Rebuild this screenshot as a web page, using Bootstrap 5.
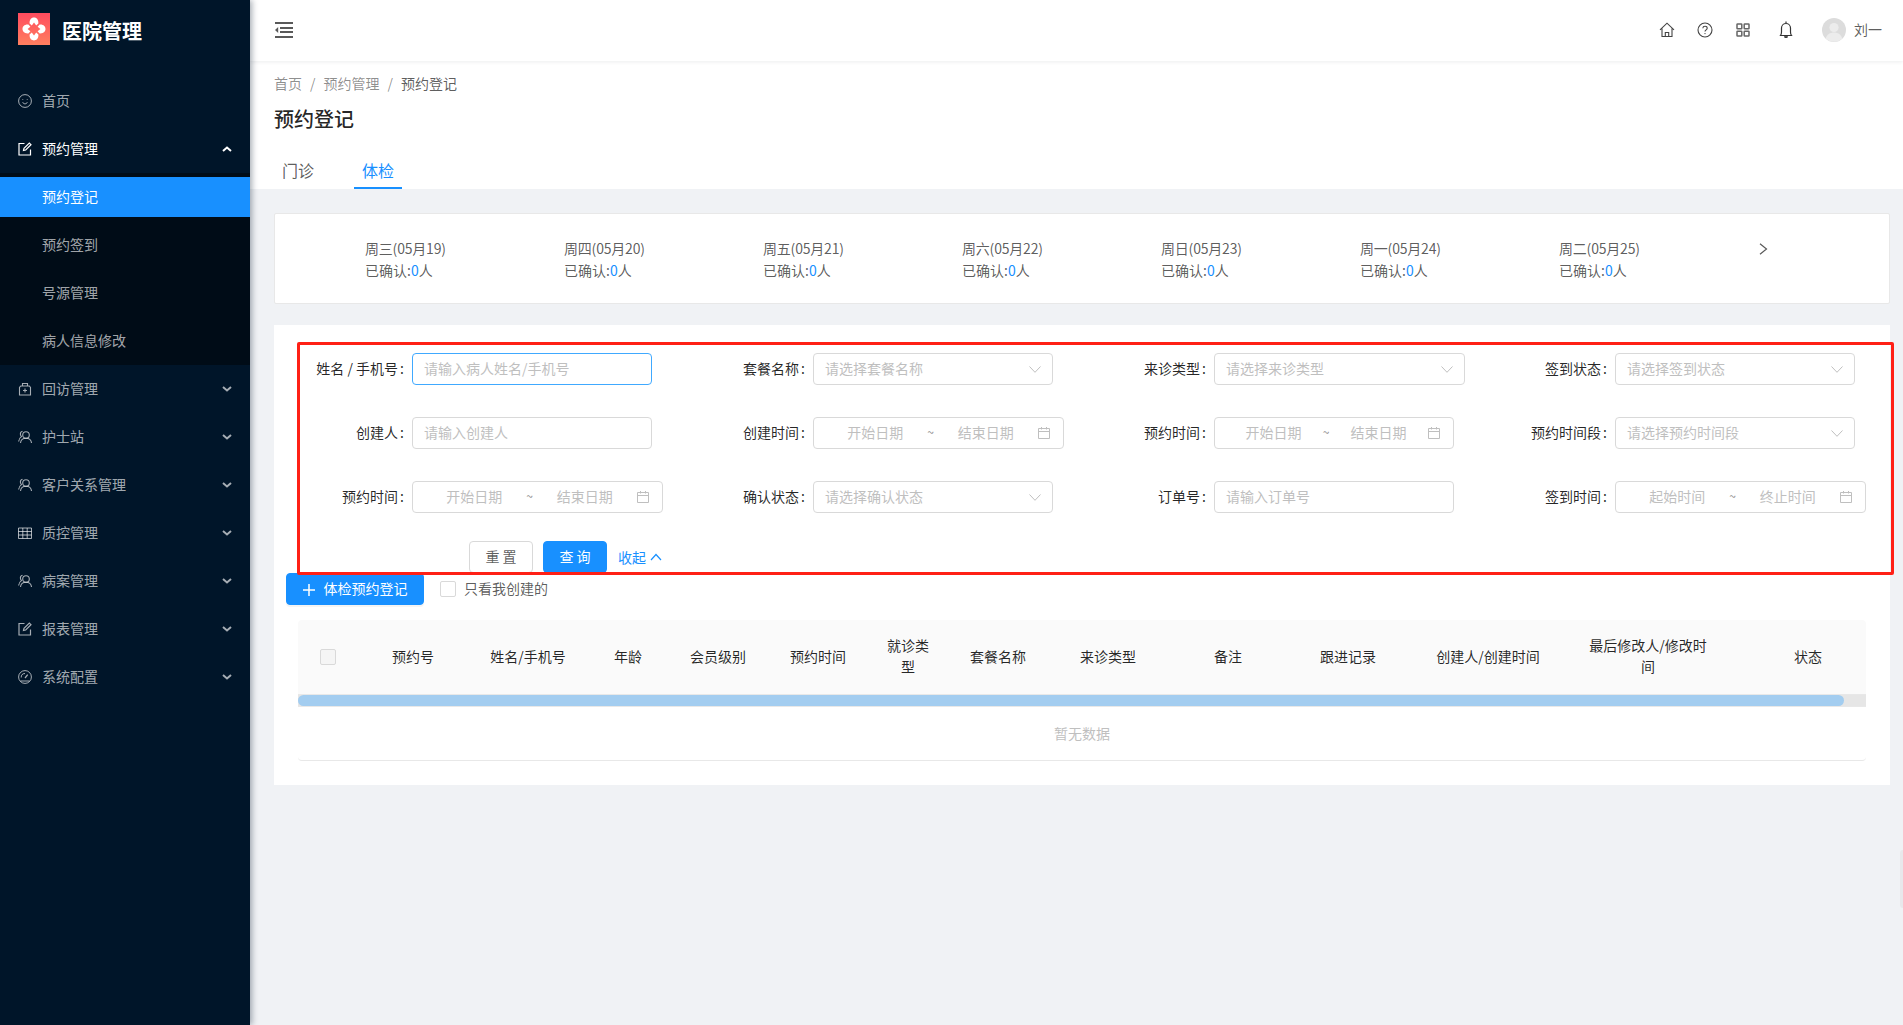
<!DOCTYPE html>
<html lang="zh-CN">
<head>
<meta charset="utf-8">
<title>预约登记</title>
<link href="https://cdn.jsdelivr.net/npm/bootstrap@5.3.0/dist/css/bootstrap.min.css" rel="stylesheet">
<style>
html,body{height:100%}
body{font-family:"Noto Sans CJK SC","Noto Sans",sans-serif;font-size:14px;line-height:22px;color:rgba(0,0,0,.65);background:#f0f2f5;overflow:hidden}
.app-side{width:250px;background:#001529;box-shadow:2px 0 6px rgba(0,21,41,.35);z-index:5;color:rgba(255,255,255,.65)}
.app-logo{height:81px;padding:13px 0 0 18px}
.app-logo svg{display:block}
.app-logo span{font-size:20px;font-weight:700;color:#fff;line-height:35px;margin-left:12px}
.m-item{height:40px;padding:0 18px 2px;margin-bottom:8px;display:flex;align-items:center;color:rgba(255,255,255,.65)}
.m-item svg{margin-top:2px}
.m-item .ic{width:14px;height:14px;margin-right:10px;flex:none}
.m-item .ch{width:10px;height:6px;margin-left:auto;margin-right:0}
.m-open{color:#fff;margin-bottom:4px}
.m-sub{background:#000c17;padding:4px 0;margin-bottom:4px}
.m-sub .m-item{padding-left:42px}
.m-sub .m-item:last-child{margin-bottom:0}
.m-active{background:#1890ff;color:#fff}
.app-main{min-width:0}
.top-bar{height:61px;background:#fff;box-shadow:0 1px 4px rgba(0,21,41,.08);position:relative;z-index:2;padding:0 21px 2px 25px}
.top-ic{display:block;flex:none}
.top-ic1{margin-left:auto}
.top-ic2{margin-left:22px}
.top-ic3{margin-left:23px}
.top-ic4{margin-left:29px}
.top-ava{margin-left:29px;margin-right:8px}
.top-name{padding-bottom:2px}
.page-head{background:#fff;padding:11px 24px 0;height:128px}
.crumb{line-height:22px;color:rgba(0,0,0,.45);margin:0;padding:0;list-style:none}
.crumb i{font-style:normal;margin:0 8px}
.crumb b{font-weight:400;color:rgba(0,0,0,.65)}
.page-title{font-size:20px;font-weight:500;line-height:28px;color:rgba(0,0,0,.85);margin:11px 0 20px}
.tab-bar{gap:32px}
.tab-one{width:48px;height:36px;font-size:16px;line-height:34px;text-align:center;color:rgba(0,0,0,.65)}
.tab-on{color:#1890ff;border-bottom:2px solid #1890ff}
.page-body{padding:24px 13px 0 24px}
.day-card{height:91px;border:1px solid #e8e8e8;border-radius:2px;background:#fff;padding:23px 0 0 90px;margin-bottom:21px}
.day-one{width:199px;color:rgba(0,0,0,.65)}
.day-one::first-line{letter-spacing:-.2px}
.day-one em{font-style:normal;color:#1890ff}
.day-arrow{margin-left:1px;margin-top:6px;display:block}
.panel-main{background:#fff;height:460px;position:relative;padding:28px 0 0}
.red-mark{position:absolute;left:23px;top:17px;width:1597px;height:233px;border:3px solid #ff2016;border-radius:2px;pointer-events:none;z-index:3}
.form-grid{display:grid;grid-template-columns:repeat(4,401px);row-gap:32px;padding-left:18px}
.fld{display:flex;align-items:center;height:32px}
.fld label{width:112px;margin-right:8px;padding-bottom:2px;text-align:right;color:rgba(0,0,0,.85);white-space:nowrap;flex:none}
.lab-c{margin-left:2px}
.w240{width:240px}.w251{width:251px}
.ctl.form-control{height:32px;padding:3px 11px 5px;font-size:14px;line-height:22px;border:1px solid #d9d9d9;border-radius:4px;color:#bfbfbf;box-shadow:none;flex:none}
.ctl.form-control::placeholder{color:#bfbfbf}
.ctl.ctl-focus{border-color:#40a9ff}
.ctl svg{margin-top:2px}
.ctl-sel{display:flex;align-items:center;justify-content:space-between;padding-right:11px!important}
.ctl-rng{display:flex;align-items:center;padding-left:10px!important;padding-right:12px!important}
.ctl-rng span{flex:1;text-align:center}
.ctl-rng i{font-style:normal;width:8px;font-size:12px;text-align:center;color:#8c8c8c}
.btn-row{margin:28px 0 0 195px;gap:10px;height:32px}
.btn-a{width:64px;height:32px;padding:0 0 2px;font-size:14px;line-height:28px;border-radius:4px;border:1px solid #d9d9d9;background:#fff;color:rgba(0,0,0,.65)}
.btn-b{background:#1890ff;border-color:#1890ff;color:#fff}
.fold-link{color:#1890ff;margin-left:1px;text-decoration:none}
.add-row{margin:0 0 0 12px;height:32px}
.add-row label{padding-bottom:2px}
.btn-add{width:138px;height:32px;padding:0 0 2px;font-size:14px;line-height:28px;border-radius:4px;background:#1890ff;border:1px solid #1890ff;color:#fff;box-shadow:0 2px 0 rgba(0,0,0,.045)}
.btn-add svg{margin-right:9px;vertical-align:-2px}
.chk-one.form-check-input{width:16px;height:16px;margin:0 8px 0 16px;border:1px solid #d9d9d9;border-radius:2px}
.tbl-box{margin:15px 24px 0;overflow:hidden;border-bottom:1px solid #e8e8e8;border-radius:4px}
.tbl-head.table{table-layout:fixed;width:1590px;margin:0;--bs-table-bg:#fafafa}
.tbl-head th{background:#fafafa;height:74px;padding:15px 16px 17px;font-weight:400;font-size:14px;line-height:21px;color:rgba(0,0,0,.85);text-align:center;vertical-align:middle;border:0}
.tbl-head .form-check-input{width:16px;height:16px;margin:2px auto 0;display:block;background:#f5f5f5;border:1px solid #d9d9d9;border-radius:2px;opacity:1}
.c60{width:60px}.c80{width:80px}.c100{width:100px}.c110{width:110px}.c120{width:120px}.c160{width:160px}
.scroll-track{height:13px;background:#e6e6e6;border-top:1px solid #e8e8e8;border-bottom:1px solid #e8e8e8}
.scroll-thumb{width:1546px;height:11px;background:#a3cdf0;border-radius:6px}
.empty-row{height:53px;line-height:53px;text-align:center;color:#bfbfbf}
.edge-tab{position:fixed;right:0;top:850px;width:3px;height:58px;background:#e8e8eb;border-radius:4px 0 0 4px}
</style>
</head>
<body>
<div class="d-flex h-100">
  <aside class="app-side flex-shrink-0 position-relative">
    <div class="app-logo d-flex align-items-start">
      <svg width="32" height="32" viewBox="0 0 32 32"><defs><linearGradient id="lg" x1="0" y1="0" x2="0" y2="1"><stop offset="0" stop-color="#ff4b5f"/><stop offset="1" stop-color="#ff7f5f"/></linearGradient><path id="pt" fill="#fff" d="M11.600 10.400 13.800 12.400 16 9.600l2.200 2.800 2.200-2c.3-4.200-2.200-5.900-4.400-5.900s-4.700 1.700-4.400 5.900z"/></defs><rect width="32" height="32" fill="url(#lg)"/><use href="#pt"/><use href="#pt" transform="rotate(90 16 16)"/><use href="#pt" transform="rotate(180 16 16)"/><use href="#pt" transform="rotate(270 16 16)"/></svg>
      <span>医院管理</span>
    </div>
    <div class="m-item"><svg class="ic" viewBox="0 0 14 14" fill="none" stroke="currentColor"><circle cx="7" cy="7" r="6.400"/><path d="M4.600 8.200c.6 1.100 1.400 1.600 2.400 1.600s1.800-.5 2.400-1.600"/><circle cx="4.800" cy="5.500" r=".5" fill="currentColor" stroke="none"/><circle cx="9.200" cy="5.500" r=".5" fill="currentColor" stroke="none"/></svg>首页</div>
    <div class="m-item m-open"><svg class="ic" viewBox="0 0 14 14" fill="none" stroke="currentColor" stroke-width="1.200"><path d="M6.500 1.500H1v11.500h11.500V7.500"/><path d="M5.500 8.500 6 6.300 11.300 1 13 2.700 7.700 8z"/></svg>预约管理<svg class="ch" viewBox="0 0 10 6" fill="none" stroke="currentColor" stroke-width="2"><path d="M1 5l4-3.500L9 5"/></svg></div>
    <div class="m-sub">
      <div class="m-item m-active">预约登记</div>
      <div class="m-item">预约签到</div>
      <div class="m-item">号源管理</div>
      <div class="m-item">病人信息修改</div>
    </div>
    <div class="m-item"><svg class="ic" viewBox="0 0 14 14" fill="none" stroke="currentColor" stroke-width="1.100"><path d="M2.700 4h8.600l1.200 1.500V13h-11V5.500z"/><path d="M4.500 3.800V1.500h5v2.300"/><path d="M7 6.500v4M5 8.500h4"/></svg>回访管理<svg class="ch" viewBox="0 0 10 6" fill="none" stroke="currentColor" stroke-width="2"><path d="M1 1l4 3.500L9 1"/></svg></div>
    <div class="m-item"><svg class="ic" viewBox="0 0 14 14" fill="none" stroke="currentColor" stroke-width="1.100"><circle cx="8" cy="5" r="3.300"/><path d="M2.500 13c.3-2.800 2.500-4.700 5.500-4.700s5.200 1.900 5.500 4.700"/><path d="M4.500 1.300C3 1.700 2.300 3 2.400 4.300c.1 1 .5 1.700 1.100 2.300C2 7.500.8 9.300.6 11.500"/></svg>护士站<svg class="ch" viewBox="0 0 10 6" fill="none" stroke="currentColor" stroke-width="2"><path d="M1 1l4 3.500L9 1"/></svg></div>
    <div class="m-item"><svg class="ic" viewBox="0 0 14 14" fill="none" stroke="currentColor" stroke-width="1.100"><circle cx="8" cy="5" r="3.300"/><path d="M2.500 13c.3-2.800 2.500-4.700 5.500-4.700s5.200 1.900 5.500 4.700"/><path d="M4.500 1.300C3 1.700 2.300 3 2.400 4.300c.1 1 .5 1.700 1.100 2.300C2 7.500.8 9.300.6 11.500"/></svg>客户关系管理<svg class="ch" viewBox="0 0 10 6" fill="none" stroke="currentColor" stroke-width="2"><path d="M1 1l4 3.500L9 1"/></svg></div>
    <div class="m-item"><svg class="ic" viewBox="0 0 14 14" fill="none" stroke="currentColor"><path d="M.5 2h13v10.500H.5zM.5 5.500h13M.5 9h13M4.800 2v10.500M9.200 2v10.500"/></svg>质控管理<svg class="ch" viewBox="0 0 10 6" fill="none" stroke="currentColor" stroke-width="2"><path d="M1 1l4 3.500L9 1"/></svg></div>
    <div class="m-item"><svg class="ic" viewBox="0 0 14 14" fill="none" stroke="currentColor" stroke-width="1.100"><circle cx="8" cy="5" r="3.300"/><path d="M2.500 13c.3-2.800 2.500-4.700 5.500-4.700s5.200 1.900 5.500 4.700"/><path d="M4.500 1.300C3 1.700 2.300 3 2.400 4.300c.1 1 .5 1.700 1.100 2.300C2 7.500.8 9.300.6 11.500"/></svg>病案管理<svg class="ch" viewBox="0 0 10 6" fill="none" stroke="currentColor" stroke-width="2"><path d="M1 1l4 3.500L9 1"/></svg></div>
    <div class="m-item"><svg class="ic" viewBox="0 0 14 14" fill="none" stroke="currentColor" stroke-width="1.200"><path d="M6.500 1.500H1v11.500h11.500V7.500"/><path d="M5.500 8.500 6 6.300 11.300 1 13 2.700 7.700 8z"/></svg>报表管理<svg class="ch" viewBox="0 0 10 6" fill="none" stroke="currentColor" stroke-width="2"><path d="M1 1l4 3.500L9 1"/></svg></div>
    <div class="m-item"><svg class="ic" viewBox="0 0 14 14" fill="none" stroke="currentColor"><circle cx="7" cy="7" r="6.400"/><path d="M3.200 7.500A3.900 3.900 0 0 1 7 3.500"/><path d="M7 8 9.700 4.700" stroke-width="1.300"/><path d="M2.500 11h9"/></svg>系统配置<svg class="ch" viewBox="0 0 10 6" fill="none" stroke="currentColor" stroke-width="2"><path d="M1 1l4 3.500L9 1"/></svg></div>
  </aside>

  <div class="app-main flex-grow-1 d-flex flex-column">
    <header class="top-bar d-flex align-items-center">
      <svg class="top-ic" width="18" height="16" viewBox="0 0 18 16" fill="#595959"><rect width="18" height="2"/><rect x="5" y="5" width="13" height="2"/><rect x="5" y="9" width="13" height="2"/><rect y="14" width="18" height="2"/><path d="M3.200 5v6L0 8z"/></svg>
      <svg class="top-ic top-ic1" width="16" height="16" viewBox="0 0 16 16" fill="none" stroke="#444" stroke-width="1.100"><path d="M1 7.800 8 1.200l7 6.600M3 6.600v7.900h10V6.600"/><path d="M6.300 14.500v-4h3.400v4"/></svg>
      <svg class="top-ic top-ic2" width="16" height="16" viewBox="0 0 16 16" fill="none" stroke="#444" stroke-width="1.100"><circle cx="8" cy="8" r="7"/><path d="M5.800 6.200C5.900 5 6.800 4.300 8 4.300c1.300 0 2.200.8 2.200 1.900 0 1.700-2.200 1.600-2.200 3.400"/><circle cx="8" cy="11.600" r=".7" fill="#444" stroke="none"/></svg>
      <svg class="top-ic top-ic3" width="14" height="14" viewBox="0 0 14 14" fill="none" stroke="#666" stroke-width="1.500"><rect x="1" y="1" width="4.800" height="4.800" rx=".6"/><rect x="8.200" y="1" width="4.800" height="4.800" rx=".6"/><rect x="1" y="8.200" width="4.800" height="4.800" rx=".6"/><rect x="8.200" y="8.200" width="4.800" height="4.800" rx=".6"/></svg>
      <svg class="top-ic top-ic4" width="14" height="18" viewBox="0 0 14 18" fill="none" stroke="#333" stroke-width="1.200"><path d="M1.500 14.500c.8-1 1-2 1-3.500V7a4.500 4.500 0 0 1 9 0v4c0 1.500.2 2.500 1 3.500zM7 .6v2"/><path d="M5.500 15.300c.2 1.400 2.800 1.400 3 0" fill="#333"/></svg>
      <svg class="top-ic top-ava" width="24" height="24" viewBox="0 0 24 24"><circle cx="12" cy="12" r="12" fill="#dcdcdc"/><circle cx="12" cy="9.500" r="4.600" fill="#ececec"/><path d="M3.800 20.500c1-4 4.300-6 8.200-6s7.200 2 8.200 6a12 12 0 0 1-16.400 0z" fill="#ececec"/></svg>
      <span class="top-name">刘一</span>
    </header>

    <section class="page-head">
      <ol class="crumb d-flex"><li>首页</li><li><i>/</i>预约管理</li><li><i>/</i><b>预约登记</b></li></ol>
      <h1 class="page-title">预约登记</h1>
      <div class="tab-bar d-flex">
        <div class="tab-one">门诊</div>
        <div class="tab-one tab-on">体检</div>
      </div>
    </section>

    <main class="page-body">
      <div class="day-card d-flex">
        <div class="day-one">周三(05月19)<br>已确认:<em>0</em>人</div>
        <div class="day-one">周四(05月20)<br>已确认:<em>0</em>人</div>
        <div class="day-one">周五(05月21)<br>已确认:<em>0</em>人</div>
        <div class="day-one">周六(05月22)<br>已确认:<em>0</em>人</div>
        <div class="day-one">周日(05月23)<br>已确认:<em>0</em>人</div>
        <div class="day-one">周一(05月24)<br>已确认:<em>0</em>人</div>
        <div class="day-one">周二(05月25)<br>已确认:<em>0</em>人</div>
        <svg class="day-arrow" width="9" height="12" viewBox="0 0 9 12" fill="none" stroke="#595959" stroke-width="1.200"><path d="M1 .8 7.500 6 1 11.200"/></svg>
      </div>

      <div class="panel-main">
        <div class="red-mark"></div>
        <form class="form-grid">
          <div class="fld"><label>姓名 / 手机号<span class="lab-c">:</span></label><input class="form-control ctl ctl-focus w240" placeholder="请输入病人姓名/手机号"></div>
          <div class="fld"><label>套餐名称<span class="lab-c">:</span></label><div class="form-control ctl ctl-sel w240">请选择套餐名称<svg width="12" height="7" viewBox="0 0 12 7" fill="none" stroke="#bfbfbf"><path d="M.5.5 6 6.300 11.500.5"/></svg></div></div>
          <div class="fld"><label>来诊类型<span class="lab-c">:</span></label><div class="form-control ctl ctl-sel w251">请选择来诊类型<svg width="12" height="7" viewBox="0 0 12 7" fill="none" stroke="#bfbfbf"><path d="M.5.5 6 6.300 11.500.5"/></svg></div></div>
          <div class="fld"><label>签到状态<span class="lab-c">:</span></label><div class="form-control ctl ctl-sel w240">请选择签到状态<svg width="12" height="7" viewBox="0 0 12 7" fill="none" stroke="#bfbfbf"><path d="M.5.5 6 6.300 11.500.5"/></svg></div></div>

          <div class="fld"><label>创建人<span class="lab-c">:</span></label><input class="form-control ctl w240" placeholder="请输入创建人"></div>
          <div class="fld"><label>创建时间<span class="lab-c">:</span></label><div class="form-control ctl ctl-rng w251"><span>开始日期</span><i>~</i><span>结束日期</span><svg width="14" height="14" viewBox="0 0 14 14" fill="none" stroke="#bfbfbf"><path d="M1.500 2.500h11v10h-11zM1.500 5.500h11M4.500 1v2.500M9.500 1v2.500"/></svg></div></div>
          <div class="fld"><label>预约时间<span class="lab-c">:</span></label><div class="form-control ctl ctl-rng w240"><span>开始日期</span><i>~</i><span>结束日期</span><svg width="14" height="14" viewBox="0 0 14 14" fill="none" stroke="#bfbfbf"><path d="M1.500 2.500h11v10h-11zM1.500 5.500h11M4.500 1v2.500M9.500 1v2.500"/></svg></div></div>
          <div class="fld"><label>预约时间段<span class="lab-c">:</span></label><div class="form-control ctl ctl-sel w240">请选择预约时间段<svg width="12" height="7" viewBox="0 0 12 7" fill="none" stroke="#bfbfbf"><path d="M.5.5 6 6.300 11.500.5"/></svg></div></div>

          <div class="fld"><label>预约时间<span class="lab-c">:</span></label><div class="form-control ctl ctl-rng w251"><span>开始日期</span><i>~</i><span>结束日期</span><svg width="14" height="14" viewBox="0 0 14 14" fill="none" stroke="#bfbfbf"><path d="M1.500 2.500h11v10h-11zM1.500 5.500h11M4.500 1v2.500M9.500 1v2.500"/></svg></div></div>
          <div class="fld"><label>确认状态<span class="lab-c">:</span></label><div class="form-control ctl ctl-sel w240">请选择确认状态<svg width="12" height="7" viewBox="0 0 12 7" fill="none" stroke="#bfbfbf"><path d="M.5.5 6 6.300 11.500.5"/></svg></div></div>
          <div class="fld"><label>订单号<span class="lab-c">:</span></label><input class="form-control ctl w240" placeholder="请输入订单号"></div>
          <div class="fld"><label>签到时间<span class="lab-c">:</span></label><div class="form-control ctl ctl-rng w251"><span>起始时间</span><i>~</i><span>终止时间</span><svg width="14" height="14" viewBox="0 0 14 14" fill="none" stroke="#bfbfbf"><path d="M1.500 2.500h11v10h-11zM1.500 5.500h11M4.500 1v2.500M9.500 1v2.500"/></svg></div></div>
        </form>

        <div class="btn-row d-flex align-items-center">
          <button type="button" class="btn btn-a">重 置</button>
          <button type="button" class="btn btn-a btn-b">查 询</button>
          <a class="fold-link d-flex align-items-center gap-1" href="#">收起<svg width="12" height="8" viewBox="0 0 12 8" fill="none" stroke="#1890ff" stroke-width="1.200"><path d="M1 7 6 1.500 11 7"/></svg></a>
        </div>

        <div class="add-row d-flex align-items-center">
          <button type="button" class="btn btn-add"><svg width="12" height="12" viewBox="0 0 12 12" fill="none" stroke="#fff" stroke-width="1.500"><path d="M6 0v12M0 6h12"/></svg>体检预约登记</button>
          <input class="form-check-input chk-one" type="checkbox" id="mine"><label for="mine">只看我创建的</label>
        </div>

        <div class="tbl-box">
          <table class="table tbl-head">
            <colgroup><col class="c60"><col class="c110"><col class="c120"><col class="c80"><col class="c100"><col class="c100"><col class="c80"><col class="c100"><col class="c120"><col class="c120"><col class="c120"><col class="c160"><col class="c160"><col class="c160"></colgroup>
            <thead><tr>
              <th><input class="form-check-input" type="checkbox" disabled></th>
              <th>预约号</th><th>姓名/手机号</th><th>年龄</th><th>会员级别</th><th>预约时间</th><th>就诊类型</th><th>套餐名称</th><th>来诊类型</th><th>备注</th><th>跟进记录</th><th>创建人/创建时间</th><th>最后修改人/修改时间</th><th>状态</th>
            </tr></thead>
          </table>
          <div class="scroll-track"><div class="scroll-thumb"></div></div>
          <div class="empty-row">暂无数据</div>
        </div>
      </div>
    </main>
  </div>
</div>
<div class="edge-tab"></div>
<script src="https://cdn.jsdelivr.net/npm/bootstrap@5.3.0/dist/js/bootstrap.bundle.min.js"></script>
</body>
</html>
